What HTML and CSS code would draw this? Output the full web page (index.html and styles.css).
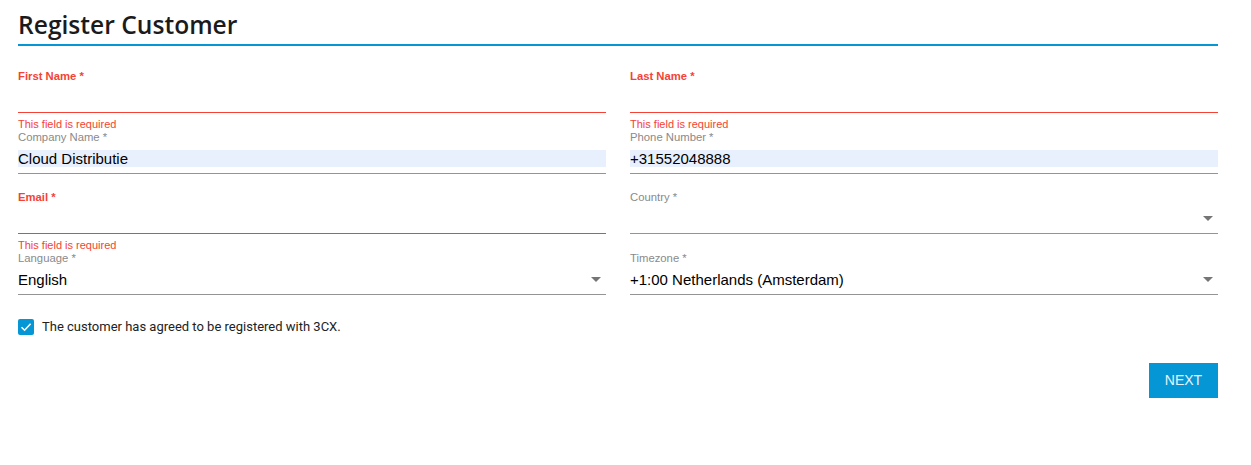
FILE: index.html
```html
<!DOCTYPE html>
<html lang="en">
<head>
    <meta charset="UTF-8">
    <title>Register Customer</title>
    <link rel="stylesheet" href="styles.css">
</head>
<body>
    <div class="page">
        <h1 class="title">Register Customer</h1>

        <div class="form-grid">
            <div class="field invalid">
                <label>First Name *</label>
                <div class="control"><span class="value"></span></div>
                <div class="error">This field is required</div>
            </div>
            <div class="field invalid">
                <label>Last Name *</label>
                <div class="control"><span class="value"></span></div>
                <div class="error">This field is required</div>
            </div>

            <div class="field">
                <label>Company Name *</label>
                <div class="control"><span class="value autofill">Cloud Distributie</span></div>
            </div>
            <div class="field">
                <label>Phone Number *</label>
                <div class="control"><span class="value autofill">+31552048888</span></div>
            </div>

            <div class="field invalid">
                <label>Email *</label>
                <div class="control"><span class="value"></span></div>
                <div class="error">This field is required</div>
            </div>
            <div class="field">
                <label>Country *</label>
                <div class="control select"><span class="value"></span><span class="arrow"></span></div>
            </div>

            <div class="field">
                <label>Language *</label>
                <div class="control select"><span class="value">English</span><span class="arrow"></span></div>
            </div>
            <div class="field">
                <label>Timezone *</label>
                <div class="control select"><span class="value">+1:00 Netherlands (Amsterdam)</span><span class="arrow"></span></div>
            </div>
        </div>

        <div class="agree">
            <span class="checkbox">
                <svg width="16" height="16" viewBox="0 0 16 16"><path d="M3.5 8.2 L6.6 11.2 L12.6 4.8" fill="none" stroke="#fff" stroke-width="1.6"/></svg>
            </span>
            <span class="agree-text">The customer has agreed to be registered with 3CX.</span>
        </div>

        <div class="actions">
            <button class="btn-next">NEXT</button>
        </div>
    </div>
</body>
</html>
```

FILE: styles.css
```css
body {
    margin: 0;
    padding: 0;
    background: #fff;
    font-family: "Liberation Sans", Arial, sans-serif;
    color: #000;
}

.page {
    padding: 0 33px 0 18px;
}

.title {
    margin: 0;
    padding-top: 9px;
    height: 35px;
    font-family: "Open Sans", sans-serif;
    font-weight: 600;
    font-size: 24.6px;
    line-height: 32px;
    color: #1b1b1b;
    border-bottom: 2px solid #0596d5;
}

.form-grid {
    display: grid;
    grid-template-columns: 1fr 1fr;
    column-gap: 24px;
    padding-top: 24px;
}

.field {
    height: 60.67px;
}

.field label {
    display: block;
    font-family: "Liberation Sans", Arial, sans-serif;
    font-size: 11.3px;
    line-height: 13px;
    color: #8a8a8a;
}

.field.invalid label {
    color: #f44336;
    font-weight: bold;
}

.control {
    display: flex;
    align-items: center;
    margin-top: 6px;
    padding-bottom: 6px;
    border-bottom: 1px solid #949494;
}

.field.invalid .control {
    border-bottom-color: #f44336;
}

.value {
    flex: 1;
    height: 17px;
    font-size: 15px;
    line-height: 17px;
    white-space: nowrap;
}

.value.autofill {
    background: #e8f0fe;
}

.arrow {
    width: 0;
    height: 0;
    margin-right: 5px;
    border-left: 5px solid transparent;
    border-right: 5px solid transparent;
    border-top: 5px solid #757575;
}

.error {
    margin-top: 5px;
    font-family: "Liberation Sans", Arial, sans-serif;
    font-size: 11px;
    line-height: 13px;
    color: #f44336;
}

.agree {
    display: flex;
    align-items: center;
    gap: 8px;
    margin-top: 6px;
}

.checkbox {
    width: 16px;
    height: 16px;
    border-radius: 2px;
    background: #0596d5;
    display: flex;
}

.agree-text {
    font-family: Roboto, sans-serif;
    font-size: 13px;
    color: #222;
}

.actions {
    display: flex;
    justify-content: flex-end;
    margin-top: 28px;
}

.btn-next {
    width: 69px;
    height: 35px;
    border: none;
    border-radius: 0;
    background: #0596d5;
    color: #e6f4fb;
    font-family: "Liberation Sans", Arial, sans-serif;
    font-size: 14px;
    cursor: pointer;
}
```
